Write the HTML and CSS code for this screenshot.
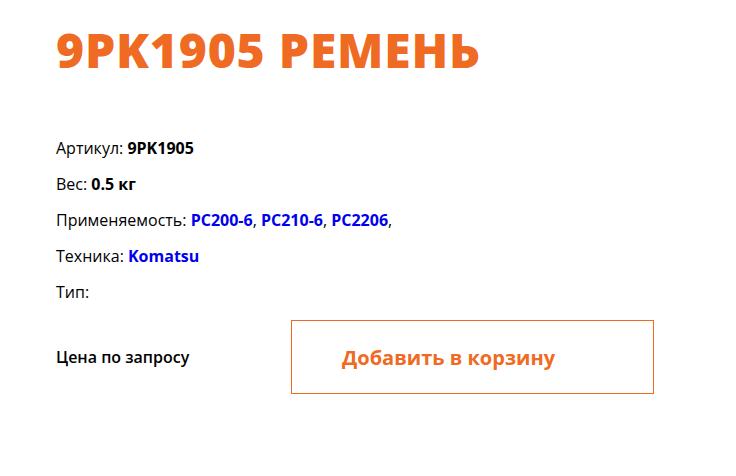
FILE: index.html
```html
<!DOCTYPE html>
<html lang="ru">
<head>
    <meta charset="UTF-8">
    <meta name="viewport" content="width=device-width, initial-scale=1.0">
    <title>9PK1905 Ремень</title>
    <link rel="stylesheet" href="styles.css">
</head>
<body>
    <div class="product">
        <h1 class="product-title">9PK1905 Ремень</h1>
        <div class="product-info">
            <p>Артикул: <b>9PK1905</b></p>
            <p>Вес: <b>0.5 кг</b></p>
            <p>Применяемость: <a href="#">PC200-6</a>, <a href="#">PC210-6</a>, <a href="#">PC2206</a>,</p>
            <p>Техника: <a href="#">Komatsu</a></p>
            <p>Тип:</p>
        </div>
        <div class="buy">
            <div class="price">Цена по запросу</div>
            <button class="add-cart">Добавить в корзину</button>
        </div>
    </div>
</body>
</html>
```

FILE: styles.css
```css
body, html {
    margin: 0;
    padding: 0;
    font-family: "Open Sans", Arial, sans-serif;
    background: #fff;
    color: #000;
}

.product {
    padding: 22px 56px;
}

.product-title {
    margin: 0 0 59px;
    font-size: 48px;
    font-weight: 800;
    letter-spacing: 0.8px;
    text-transform: uppercase;
    color: #ef6a22;
    line-height: 56px;
}

.product-info p {
    margin: 0 0 14px;
    font-size: 16px;
    line-height: 22px;
}

.product-info b {
    font-weight: 700;
}

.product-info a {
    color: #0000ee;
    font-weight: 700;
    text-decoration: none;
}

.buy {
    display: flex;
    align-items: center;
    margin-top: 17px;
}

.price {
    width: 235px;
    font-size: 16px;
    font-weight: 600;
}

.add-cart {
    width: 363px;
    height: 74px;
    padding: 0 0 0 50px;
    text-align: left;
    background: #fff;
    border: 1px solid #ef6a22;
    color: #ef6a22;
    font-family: "Open Sans", Arial, sans-serif;
    font-size: 20px;
    font-weight: 700;
    cursor: pointer;
}
```
